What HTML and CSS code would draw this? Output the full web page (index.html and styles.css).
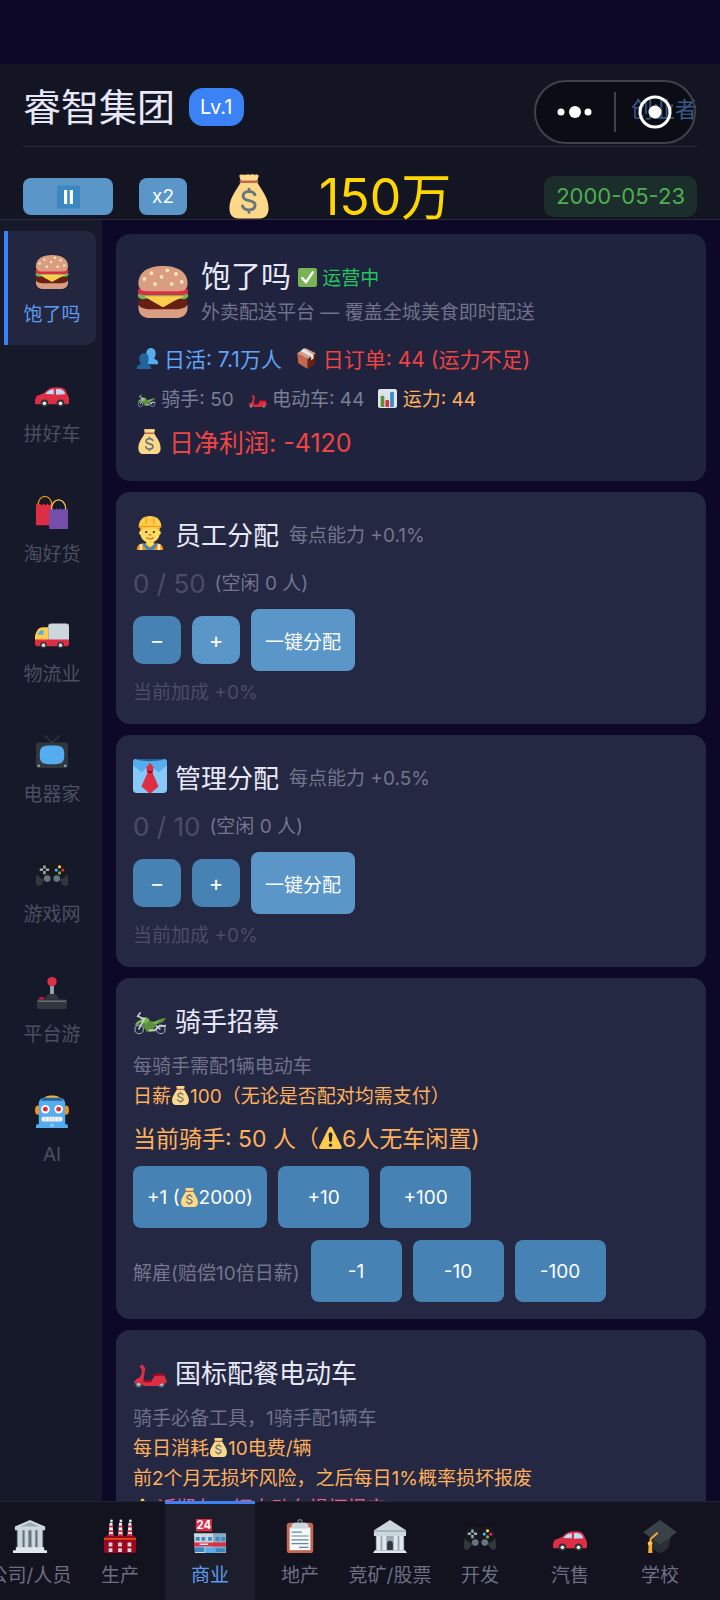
FILE: index.html
```html
<!DOCTYPE html>
<html lang="zh-CN">
<head>
  <meta charset="UTF-8" />
  <meta name="viewport" content="width=device-width, initial-scale=1.0" />
  <title>睿智集团</title>
  <link rel="stylesheet" href="styles.css">
</head>
<body>
  <!-- Icon sprite -->
  <svg class="sprite" width="0" height="0" aria-hidden="true">
    <symbol id="burger" viewBox="0 0 36 36">
      <path fill="#D99E82" d="M1 27h34v2c0 4-3 7-8 7H9c-5 0-8-3-8-7z"/>
      <path fill="#662113" d="M1 23h34v3c0 3-5 4-8 4H9c-3 0-8-1-8-4z"/>
      <path fill="#77B255" d="M1 19h34c1.500 2-.5 4-3 4-2 0-4-1-6 0-3 2-5 1-8 1s-5 1-8-1c-2-1-4 0-6 0-3 0-4-2-3-4z"/>
      <path fill="#FFCC4D" d="M5 21h28l-7 3-7 4c-1 .5-1.500.5-2 0l-7-4z"/>
      <path fill="#DD2E44" d="M1 16h34c1 2 0 4-3 4H4c-3 0-4-2-3-4z"/>
      <path fill="#D99E82" d="M18 0C8 0 1 4 1 12c0 4 2 5.500 6 5.500h22c4 0 6-1.500 6-5.500C35 4 28 0 18 0z"/>
      <g fill="#FFE8B6"><circle cx="10" cy="5" r="1.300"/><circle cx="17" cy="7.500" r="1.300"/><circle cx="21" cy="3" r="1.300"/><circle cx="27" cy="5.500" r="1.300"/><circle cx="5" cy="9" r="1.300"/><circle cx="12.500" cy="12.500" r="1.300"/><circle cx="24" cy="12.500" r="1.300"/><circle cx="31" cy="11" r="1.300"/></g>
    </symbol>
    <symbol id="car" viewBox="0 -4 36 36">
      <path fill="#DD2E44" d="M1 20c0-2 2-2.500 4-3 3-1 5-2 7-4 3-3 6-4 11-4 7 0 9 1 11 7 1 2 2 3 2 6v3c0 1.500-1 2-2 2H2c-1.500 0-2-.5-2-2 0-2 0-4 1-5z"/>
      <path fill="#BBDDF5" d="M11 16c2-3 5-5 9-5v5.500zM22 11c6-.5 9 1 10 5.500l-10 .5z"/>
      <path fill="#DD2E44" d="M20 10h2v8h-2z"/>
      <circle cx="10" cy="26" r="4" fill="#292F33"/><circle cx="27" cy="26" r="4" fill="#292F33"/>
      <circle cx="10" cy="26" r="2" fill="#E1E8ED"/><circle cx="27" cy="26" r="2" fill="#E1E8ED"/>
    </symbol>
    <symbol id="bags" viewBox="0 0 36 36">
      <path fill="none" stroke="#F4900C" stroke-width="1.300" d="M3 12C3-2 18-2 18 12"/>
      <path fill="#DD2E44" d="M1 9l2 2 2-2 2 2 2-2 2 2 2-2 2 2 2-2 1 2v21H1z"/>
      <path fill="#744EAA" d="M15 14l2 2 2-2 2 2 2-2 2 2 2-2 2 2 2-2 2 2 2-2v22H15z"/>
      <path fill="none" stroke="#FFCC4D" stroke-width="1.300" d="M17.500 15c0-13 15-13 15 0"/>
    </symbol>
    <symbol id="truck" viewBox="0 -4 36 36">
      <path fill="#CCD6DD" d="M14 8c0-2 1-3 3-3h16c2 0 3 1 3 3v15H14z"/>
      <path fill="#FFCC4D" d="M0 23v-5c2-6 4-9 8-9h6v14z"/>
      <path fill="#DD2E44" d="M0 22h36v4c0 2-1 3-2 3H2c-1 0-2-1-2-3z"/>
      <path fill="#55ACEE" d="M3 17c1-4 3-5 6-5v5z"/>
      <circle cx="9" cy="28" r="3.500" fill="#292F33"/><circle cx="27" cy="28" r="3.500" fill="#292F33"/>
      <circle cx="9" cy="28" r="2" fill="#CCD6DD"/><circle cx="27" cy="28" r="2" fill="#CCD6DD"/>
    </symbol>
    <symbol id="tv" viewBox="0 0 36 36">
      <path fill="none" stroke="#31373D" stroke-width="1.300" stroke-linecap="round" d="M11 1l7 7 8-7"/>
      <rect x="1" y="8" width="34" height="27" rx="3" fill="#31373D"/>
      <path fill="#55ACEE" d="M18 11c10 0 13 1 13 10s-3 10-13 10-13-1-13-10 3-10 13-10z"/>
      <circle cx="4" cy="32.500" r="1.300" fill="#99AAB5"/><circle cx="32" cy="32.500" r="1.300" fill="#99AAB5"/>
    </symbol>
    <symbol id="gamepad" viewBox="0 -2 36 36">
      <path fill="#31373D" d="M2 18l9 5-4 6c-2 3-6 2-6-1 0-4 0-7 1-10zM34 18l-9 5 4 6c2 3 6 2 6-1 0-4 0-7-1-10z"/>
      <path fill="#17191d" d="M3 10c2-5 8-6 11-3h8c3-3 9-2 11 3 2 4 1 9-1 11-3 3-7 2-9 2H13c-2 0-6 1-9-2-2-2-3-7-1-11z"/>
      <circle cx="13" cy="23" r="3.500" fill="#66757F"/><circle cx="23" cy="23" r="3.500" fill="#66757F"/>
      <path fill="none" stroke="#99AAB5" stroke-width="2.600" d="M10 9v3.500M10 15v3.500M5 13.700h3.500M11.500 13.700H15"/>
      <circle cx="26" cy="10.500" r="1.700" fill="#FFCC4D"/><circle cx="29.500" cy="14" r="1.700" fill="#DD2E44"/><circle cx="26" cy="17" r="1.700" fill="#77B255"/><circle cx="22.500" cy="14" r="1.700" fill="#55ACEE"/>
    </symbol>
    <symbol id="joystick" viewBox="0 -1 36 36">
      <path fill="#99AAB5" d="M16 8h4v15h-4z"/>
      <path fill="#31373D" d="M10 25c2-2 2-5 5-6h6c3 1 3 4 5 6z"/>
      <ellipse cx="7" cy="24" rx="3" ry="2" fill="#BE1931"/>
      <path fill="#31373D" d="M2 25h32v8c0 1-1 2-2 2H4c-1 0-2-1-2-2z"/>
      <path fill="#66757F" d="M3 26h30v1.500H3z"/>
      <circle cx="18" cy="6" r="5" fill="#DD2E44"/>
    </symbol>
    <symbol id="robot" viewBox="0 0 36 36">
      <ellipse cx="3" cy="16" rx="3" ry="5" fill="#F4900C"/><ellipse cx="33" cy="16" rx="3" ry="5" fill="#F4900C"/>
      <path fill="#FFAC33" d="M8 5c2-6 18-6 20 0z"/>
      <path fill="#55ACEE" d="M4 9c0-4 3-6 7-6h14c4 0 7 2 7 6v22h2c1 0 1 4 1 4H1s0-4 1-4h2z"/>
      <path fill="#226699" d="M9 3h18l3 3H6z"/>
      <circle cx="11" cy="15" r="4.500" fill="#fff"/><circle cx="25" cy="15" r="4.500" fill="#fff"/>
      <circle cx="11" cy="15" r="2.600" fill="#DD2E44"/><circle cx="25" cy="15" r="2.600" fill="#DD2E44"/>
      <rect x="7" y="23" width="22" height="5" rx="2" fill="#F5F8FA"/>
      <path stroke="#99AAB5" stroke-width=".6" d="M11 23v5M15 23v5M18 23v5M21 23v5M25 23v5"/>
      <circle cx="18" cy="32" r="2" fill="#88C9F9"/>
    </symbol>
    <symbol id="money" viewBox="0 0 36 36">
      <path fill="#FDD888" d="M11 7C7 14 2 19 2 28c0 5 3 8 7 8h18c4 0 7-3 7-8 0-9-5-14-9-21z"/>
      <path fill="#FDD888" d="M10 1c2-2 3 0 4-1 2 1 3-1 4 0s2-1 4 0c1 1 2-1 4 1l-1.500 5h-13z"/>
      <path fill="#BF6952" d="M11 5h14c1 0 1 2 0 2H11c-1 0-1-2 0-2z"/>
      <path fill="none" stroke="#67757F" stroke-width="2.400" stroke-linecap="round" d="M22.800 16.500c-1-2-2.500-2.700-4.800-2.700-3 0-4.800 1.500-4.800 3.700 0 5.500 9.800 2.200 9.800 7.500 0 2.500-2 4-5 4-2.700 0-4.700-1-5.300-3.300M18 12v2M18 29v2"/>
    </symbol>
    <symbol id="check" viewBox="0 0 36 36">
      <rect width="36" height="36" rx="4" fill="#77B255"/>
      <path fill="none" stroke="#fff" stroke-width="4.500" stroke-linecap="round" stroke-linejoin="round" d="M8 19l7 8L28 8"/>
    </symbol>
    <symbol id="users" viewBox="0 0 36 36">
      <path fill="#55ACEE" d="M24 0c5 0 8 4 8 9 0 4-1 7-3 9 3 2 7 3 7 7v3H18V16c-2-1-2-4-2-7 0-5 3-9 8-9z"/>
      <path fill="#226699" d="M12 9c5 0 8 4 8 9 0 4-1 7-3 9 3 2 7 3 7 7v2H0v-2c0-4 4-5 7-7-2-2-3-5-3-9 0-5 3-9 8-9z"/>
    </symbol>
    <symbol id="package" viewBox="0 0 36 36">
      <path fill="#C1694F" d="M2 9l18 10v17L4 26z"/>
      <path fill="#662113" d="M20 19L34 9l-2 19-12 8z"/>
      <path fill="#D99E82" d="M2 9L16 0l18 9-14 10z"/>
      <path fill="#E1E8ED" d="M8 5l5-4 17 11v6l-4 3v-6z"/>
    </symbol>
    <symbol id="moto" viewBox="0 -2 36 36">
      <circle cx="6.500" cy="27" r="4.500" fill="none" stroke="#99AAB5" stroke-width="1.200"/>
      <circle cx="29.500" cy="27" r="4.500" fill="none" stroke="#99AAB5" stroke-width="1.200"/>
      <path fill="#5C913B" d="M9 16c3-2 6-1 8 2l6 1c4-2 8-4 12-4l-3 4-8 3-3 7-6 1-5-7z"/>
      <path fill="#77B255" d="M8 15l6-1 4 3-4 4-4-2-7 4c-2-1 1-5 5-6zM20 20l10-4-6 6z"/>
      <path fill="none" stroke="#CCD6DD" stroke-width="1.700" d="M6 27l6-11-7-3 3-4M17 28h6l4-4 8-1M29 27l-5-4"/>
    </symbol>
    <symbol id="scooter" viewBox="0 -3 36 36">
      <circle cx="6" cy="29" r="3.300" fill="#66757F"/><circle cx="30" cy="29" r="3.300" fill="#66757F"/>
      <circle cx="6" cy="29" r="1.300" fill="#CCD6DD"/><circle cx="30" cy="29" r="1.300" fill="#CCD6DD"/>
      <path fill="#DD2E44" d="M1 28c1-4 4-5 6-6 2-3 3-6 2-9L7 10l3-2 3 4-2 13h9c2-4 4-7 7-7h5c2 1 1 3 2 4l2 4c0 2-2 2-4 2-3 0-4 3-8 3H13c-2 0-3-1-4-3-3-1-5 0-8 0z"/>
      <path fill="#A0041E" d="M21 18h12l1 2H20zM11 25h9l-1 2h-8z"/>
    </symbol>
    <symbol id="chart" viewBox="0 0 36 36">
      <rect width="36" height="36" rx="4" fill="#E1E8ED"/>
      <path stroke="#CCD6DD" d="M2 9h32M2 18h32M2 27h32M9 2v32M18 2v32M27 2v32"/>
      <path fill="#5C913B" d="M5 13h7v21H5z"/><path fill="#DD2E44" d="M14 21h7v13h-7z"/><path fill="#3B88C3" d="M23 6h7v28h-7z"/>
    </symbol>
    <symbol id="worker" viewBox="0 0 36 36">
      <path fill="#F4900C" d="M4 36c0-5 3-7 7-7h14c4 0 7 2 7 7z"/>
      <path fill="#FFDC5D" d="M14 25h8v5l-4 3-4-3z"/>
      <path fill="#3B88C3" d="M12 29l6 5 6-5 2 2-5 5h-6l-5-5z"/>
      <path fill="#FFE8B6" d="M7 30h3v6H7zM26 30h3v6h-3z"/>
      <path fill="#FFDC5D" d="M8 11h20v5c2 0 2 4 0 4-1 5-5 8-10 8S9 25 8 20c-2 0-2-4 0-4z"/>
      <path fill="#FFAC33" d="M8 12h20v4l-3-3H11l-3 3z"/>
      <path fill="#FFCC4D" d="M6 12C6 4 11 0 18 0s12 4 12 12c0 1-24 1-24 0z"/>
      <path fill="none" stroke="#F4900C" d="M14 1v8M22 1v8M6 11h24"/>
      <circle cx="14" cy="17" r="1.200" fill="#662113"/><circle cx="22" cy="17" r="1.200" fill="#662113"/>
      <path fill="none" stroke="#C1694F" stroke-width="1.200" stroke-linecap="round" d="M14.500 23c2 1.500 5 1.500 7 0M17 20h2"/>
    </symbol>
    <symbol id="tie" viewBox="0 0 36 36">
      <rect width="36" height="36" rx="4" fill="#88C9F9"/>
      <path fill="#55ACEE" d="M0 4c0-3 1-4 4-4h28c3 0 4 1 4 4v3l-9 7-9-8-9 8-9-7z"/>
      <path fill="#226699" d="M3 0h30c-3 3-27 3-30 0z"/>
      <path fill="#DD2E44" d="M18 4l4 5-1.500 5L27 29l-8 7h-2l-8-7 6.500-15L14 9z"/>
      <path fill="#A0041E" d="M14.500 11.500c2 2 5 2 7 0l-.8 2.500c-1.500 1.500-4 1.500-5.400 0z"/>
    </symbol>
    <symbol id="warning" viewBox="0 0 36 36">
      <path fill="#FFCC4D" d="M2.500 36C.5 36-.5 34 .7 32L15.500 2.500c1-2 4-2 5 0L35.300 32c1 2 0 4-1.800 4z"/>
      <path fill="#231F20" d="M15 13c0-4 6-4 6 0l-1 10c0 2-4 2-4 0z"/><circle cx="18" cy="30" r="2.600" fill="#231F20"/>
    </symbol>
    <symbol id="museum" viewBox="0 0 36 36">
      <path fill="#66757F" d="M4 11h28v20H4z"/>
      <path fill="#CCD6DD" d="M5 11h5v20H5zM12.300 11h4v20h-4zM19.600 11h4v20h-4zM26 11h5v20h-5z"/>
      <path fill="#CCD6DD" d="M18 1L2 8v4h32V8z"/><path fill="#99AAB5" d="M18 3.500L8 8h20z"/>
      <path fill="#E1E8ED" d="M3 30h30v3H3zM0 33h36v3H0z"/>
    </symbol>
    <symbol id="factory" viewBox="0 0 36 36">
      <path fill="#F5F8FA" d="M7 4h3l1 15H6zM17 4h3l1 15h-5zM27 4h3l1 15h-5z"/>
      <path stroke="#DD2E44" stroke-width="2" d="M6.500 8h4M16.500 8h4M26.500 8h4M6 13h5M16 13h5M26 13h5M6 17h5M16 17h5M26 17h5"/>
      <g fill="#E1E8ED"><circle cx="9" cy="2" r="1.500"/><circle cx="19" cy="2" r="1.500"/><circle cx="29" cy="2" r="1.500"/></g>
      <path fill="#A0041E" d="M1 20l2-2h30l2 2v14c0 1-1 2-2 2H3c-1 0-2-1-2-2z"/>
      <path fill="#F4900C" opacity=".6" d="M1 20h34v2H1z"/>
      <path fill="#CCD6DD" d="M6 25h4v4H6zM16 25h4v4h-4zM26 25h4v4h-4zM6 31h4v4H6zM16 31h4v4h-4zM26 31h4v4h-4z"/>
    </symbol>
    <symbol id="store" viewBox="0 0 36 36">
      <rect x="3" y="0" width="17" height="13" fill="#DD2E44"/>
      <text x="11.500" y="11" text-anchor="middle" fill="#fff" class="store-sign">24</text>
      <path fill="#CCD6DD" d="M1 15h21v21H2z"/><path fill="#88A9C3" d="M22 15h13v21H22z"/>
      <path fill="#3B88C3" d="M3 19h4v4H3zM9 19h4v4H9zM16 19h4v4h-4zM24 19h4v4h-4zM30 19h4v4h-4zM2 30h10v5H2zM24 31h10v4H24z"/>
      <path fill="#55ACEE" d="M13 30h10v6H13z"/>
      <path fill="#DD2E44" d="M1 25h34v4H1z"/><path fill="#F5F8FA" d="M7 26h9v1.500H7z"/>
    </symbol>
    <symbol id="clipboard" viewBox="0 0 36 36">
      <rect x="4" y="4" width="28" height="32" rx="3" fill="#C1694F"/>
      <path fill="#F5F8FA" d="M7 9h22v24H7z"/>
      <circle cx="18" cy="3" r="2.200" fill="none" stroke="#66757F" stroke-width="1.500"/>
      <path fill="#CCD6DD" d="M9 10V7c0-2 2-3 4-3h10c2 0 4 1 4 3v3z"/>
      <path stroke="#66839b" stroke-width="1.300" d="M9 14h11M9 18h18M9 22h18M9 26h18M17 30h10"/>
    </symbol>
    <symbol id="bank" viewBox="0 0 36 36">
      <path fill="#99AAB5" d="M3 16h30v17H3z"/>
      <path fill="#E1E8ED" d="M4 18h4v15H4zM10 18h4v15h-4zM22 18h4v15h-4zM28 18h4v15h-4z"/>
      <path fill="#31373D" d="M15 34v-8c0-4 6-4 6 0v8z"/>
      <path fill="#CCD6DD" d="M18 1L1 12v6h34v-6z"/><path fill="#99AAB5" d="M1 12h34v1.500H1z"/>
      <path fill="#E1E8ED" d="M2 33h32l2 3H0z"/>
    </symbol>
    <symbol id="grad" viewBox="0 0 36 36">
      <path fill="#292F33" d="M9 18l21 0-3 12c-2 3-7 6-9 6-4-1-8-5-9-8z"/>
      <path fill="#3a4147" d="M18 1l18 13-18 13L0 14z"/>
      <path fill="none" stroke="#FFAC33" stroke-width="2" stroke-linecap="round" d="M15 15l-7 6v6"/>
      <circle cx="7.500" cy="26" r="2.500" fill="#FFCC4D"/><path fill="#FFAC33" d="M6 27h3.500l.5 9H5.500z"/>
    </symbol>
    <symbol id="pause" viewBox="0 0 36 36">
      <rect width="36" height="36" rx="2" fill="#3B88C3"/>
      <path fill="#fff" d="M11 7h5v22h-5zM20 7h5v22h-5z"/>
    </symbol>
  </svg>

  <div class="app">
    <header class="header">
      <div class="company">
        <h1>睿智集团</h1>
        <span class="level">Lv.1</span>
        <span class="rank">创业者</span>
      </div>
      <div class="status">
        <button class="btn light pause" aria-label="暂停"><svg><use href="#pause"/></svg></button>
        <button class="btn light speed">x2</button>
        <div class="cash">
          <svg><use href="#money"/></svg>
          <span>150万</span>
        </div>
        <time class="date">2000-05-23</time>
      </div>
      <div class="capsule">
        <button aria-label="更多">
          <svg width="36" height="14" viewBox="0 0 36 14" fill="#fff"><circle cx="4" cy="7" r="3.500"/><circle cx="18" cy="7" r="6"/><circle cx="31" cy="7" r="3.500"/></svg>
        </button>
        <button aria-label="关闭">
          <svg width="34" height="34" viewBox="0 0 34 34"><circle cx="17" cy="17" r="15" fill="none" stroke="#fff" stroke-width="3"/><circle cx="17" cy="17" r="6.500" fill="#fff"/></svg>
        </button>
      </div>
    </header>

    <div class="body">
      <aside class="sidebar">
        <button class="side-item active"><svg><use href="#burger"/></svg><span>饱了吗</span></button>
        <button class="side-item"><svg><use href="#car"/></svg><span>拼好车</span></button>
        <button class="side-item"><svg><use href="#bags"/></svg><span>淘好货</span></button>
        <button class="side-item"><svg><use href="#truck"/></svg><span>物流业</span></button>
        <button class="side-item"><svg><use href="#tv"/></svg><span>电器家</span></button>
        <button class="side-item"><svg><use href="#gamepad"/></svg><span>游戏网</span></button>
        <button class="side-item"><svg><use href="#joystick"/></svg><span>平台游</span></button>
        <button class="side-item"><svg><use href="#robot"/></svg><span>AI</span></button>
      </aside>

      <main class="content">
        <section class="card overview">
          <div class="overview-head">
            <svg class="logo"><use href="#burger"/></svg>
            <div>
              <div class="name-row">
                <h2>饱了吗</h2>
                <span class="running"><svg class="emoji"><use href="#check"/></svg> 运营中</span>
              </div>
              <p class="desc">外卖配送平台 — 覆盖全城美食即时配送</p>
            </div>
          </div>
          <div class="stats large">
            <span class="blue"><svg class="emoji"><use href="#users"/></svg> 日活: 7.1万人</span>
            <span class="red"><svg class="emoji"><use href="#package"/></svg> 日订单: 44 (运力不足)</span>
          </div>
          <div class="stats">
            <span><svg class="emoji"><use href="#moto"/></svg> 骑手: 50</span>
            <span><svg class="emoji"><use href="#scooter"/></svg> 电动车: 44</span>
            <span class="orange"><svg class="emoji"><use href="#chart"/></svg> 运力: 44</span>
          </div>
          <div class="profit red"><svg class="emoji"><use href="#money"/></svg> 日净利润: -4120</div>
        </section>

        <section class="card">
          <div class="card-head">
            <svg><use href="#worker"/></svg>
            <h3>员工分配</h3>
            <span class="hint">每点能力 +0.1%</span>
          </div>
          <div class="count"><span class="num">0 / 50</span><span class="hint">(空闲 0 人)</span></div>
          <div class="assign">
            <button class="btn step" aria-label="减少">−</button>
            <button class="btn light step" aria-label="增加">+</button>
            <button class="btn light auto">一键分配</button>
          </div>
          <p class="bonus">当前加成 +0%</p>
        </section>

        <section class="card">
          <div class="card-head">
            <svg><use href="#tie"/></svg>
            <h3>管理分配</h3>
            <span class="hint">每点能力 +0.5%</span>
          </div>
          <div class="count"><span class="num">0 / 10</span><span class="hint">(空闲 0 人)</span></div>
          <div class="assign">
            <button class="btn step" aria-label="减少">−</button>
            <button class="btn step" aria-label="增加">+</button>
            <button class="btn light auto">一键分配</button>
          </div>
          <p class="bonus">当前加成 +0%</p>
        </section>

        <section class="card">
          <div class="card-head">
            <svg><use href="#moto"/></svg>
            <h3>骑手招募</h3>
          </div>
          <div class="notes">
            <p>每骑手需配1辆电动车</p>
            <p class="orange">日薪<svg class="emoji"><use href="#money"/></svg>100（无论是否配对均需支付）</p>
          </div>
          <p class="current orange">当前骑手: 50 人（<svg class="emoji"><use href="#warning"/></svg>6人无车闲置)</p>
          <div class="actions">
            <button class="btn">+1 (<svg class="emoji"><use href="#money"/></svg>2000)</button>
            <button class="btn">+10</button>
            <button class="btn">+100</button>
          </div>
          <div class="actions">
            <span class="hint">解雇(赔偿10倍日薪)</span>
            <button class="btn">-1</button>
            <button class="btn">-10</button>
            <button class="btn">-100</button>
          </div>
        </section>

        <section class="card">
          <div class="card-head">
            <svg><use href="#scooter"/></svg>
            <h3>国标配餐电动车</h3>
          </div>
          <div class="notes">
            <p>骑手必备工具，1骑手配1辆车</p>
            <p class="orange">每日消耗<svg class="emoji"><use href="#money"/></svg>10电费/辆</p>
            <p class="orange">前2个月无损坏风险，之后每日1%概率损坏报废</p>
            <p class="pink"><svg class="emoji"><use href="#warning"/></svg> 近期有一辆电动车损坏报废</p>
          </div>
        </section>
      </main>
    </div>

    <nav class="tabbar">
      <div class="tabs">
        <button class="tab"><svg><use href="#museum"/></svg><span>公司/人员</span></button>
        <button class="tab"><svg><use href="#factory"/></svg><span>生产</span></button>
        <button class="tab active"><svg><use href="#store"/></svg><span>商业</span></button>
        <button class="tab"><svg><use href="#clipboard"/></svg><span>地产</span></button>
        <button class="tab"><svg><use href="#bank"/></svg><span>竞矿/股票</span></button>
        <button class="tab"><svg><use href="#gamepad"/></svg><span>开发</span></button>
        <button class="tab"><svg><use href="#car"/></svg><span>汽售</span></button>
        <button class="tab"><svg><use href="#grad"/></svg><span>学校</span></button>
      </div>
    </nav>
  </div>
</body>
</html>
```
FILE: styles.css
```css
* {
  margin: 0;
  padding: 0;
  box-sizing: border-box;
}

body {
  font-family: 'Inter', 'Noto Sans CJK SC', sans-serif;
  font-size: 19px;
  font-weight: 400;
  background: #0d0828;
  color: #e8e9f8;
}

h1,
h2,
h3 {
  font-weight: 400;
}

button {
  font: inherit;
  color: inherit;
  border: none;
  background: none;
  cursor: pointer;
}

.sprite {
  position: absolute;
}

.store-sign {
  font-size: 12px;
  font-weight: 700;
}

.emoji {
  width: 1em;
  height: 1em;
  vertical-align: -2px;
}

.blue {
  color: #60a5fa;
}

.red {
  color: #ef4444;
}

.orange {
  color: #ffb05c;
}

.pink {
  color: #f0608a;
}

.app {
  height: 100vh;
  padding-top: 64px;
  display: flex;
  flex-direction: column;
}

/* Header */
.header {
  position: relative;
  flex-shrink: 0;
  padding: 0 23px;
  background: #141523;
  border-bottom: 1px solid #2a2b38;
}

.company {
  height: 83px;
  padding-top: 4px;
  display: flex;
  align-items: center;
  gap: 14px;
  border-bottom: 1px solid #2a2b38;
}

.company h1 {
  font-size: 38px;
  line-height: 48px;
}

.level {
  padding: 0 11px;
  font-size: 20px;
  line-height: 38px;
  border-radius: 14px;
  background: #3b82f6;
  color: #ffffff;
}

.rank {
  margin-left: auto;
  font-size: 22px;
  color: #5f93de;
}

.status {
  height: 72px;
  padding-top: 27px;
  display: flex;
  align-items: center;
}

.btn {
  display: inline-flex;
  align-items: center;
  justify-content: center;
  border-radius: 8px;
  background: #4682b4;
  color: #ffffff;
}

.btn.light {
  background: #5a96c8;
}

.pause {
  width: 90px;
  height: 37px;
  margin-right: 26px;
}

.pause svg {
  width: 23px;
  height: 24px;
}

.speed {
  width: 48px;
  height: 37px;
}

.cash {
  flex: 1;
  padding-left: 40px;
  display: flex;
  align-items: center;
  gap: 48px;
  font-size: 50px;
  line-height: 44px;
  color: #ffd700;
  white-space: nowrap;
}

.cash svg {
  width: 44px;
  height: 45px;
}

.date {
  padding: 0 12px;
  font-size: 22px;
  line-height: 41px;
  border-radius: 10px;
  background: #1c2e2c;
  color: #4caf50;
}

/* Floating mini-program menu */
.capsule {
  position: absolute;
  top: 16px;
  right: 24px;
  width: 162px;
  height: 64px;
  display: flex;
  align-items: center;
  border: 2px solid #41414b;
  border-radius: 32px;
  background: rgba(0, 0, 0, 0.4);
}

.capsule button {
  flex: 1;
  height: 40px;
  display: flex;
  align-items: center;
  justify-content: center;
}

.capsule button + button {
  border-left: 2px solid #41414b;
}

/* Page body */
.body {
  flex: 1;
  min-height: 0;
  display: flex;
  overflow: hidden;
}

.sidebar {
  width: 102px;
  flex-shrink: 0;
  padding: 11px 6px 0 4px;
  display: flex;
  flex-direction: column;
  gap: 6px;
  background: #161929;
}

.side-item {
  height: 114px;
  padding-top: 24px;
  flex-shrink: 0;
  display: flex;
  flex-direction: column;
  align-items: center;
  gap: 12px;
  line-height: 28px;
  border-left: 4px solid transparent;
  border-radius: 0 10px 10px 0;
  color: #4c4f62;
}

.side-item svg {
  width: 34px;
  height: 34px;
  flex-shrink: 0;
}

.side-item.active {
  background: #22273f;
  border-left-color: #3b82f6;
  color: #5f9bf0;
}

.content {
  flex: 1;
  min-width: 0;
  padding: 14px 14px 0;
  display: flex;
  flex-direction: column;
  gap: 11px;
}

.card {
  flex-shrink: 0;
  padding: 17px;
  border-radius: 14px;
  background: #252842;
}

.overview {
  padding: 21px 21px 15px;
  background: #1f233d;
}

.overview-head {
  display: flex;
  align-items: center;
  gap: 12px;
  margin-bottom: 11px;
}

.logo {
  width: 52px;
  height: 52px;
}

.name-row {
  display: flex;
  align-items: center;
  gap: 7px;
}

.name-row h2 {
  font-size: 30px;
  line-height: 42px;
}

.running {
  color: #22c55e;
}

.desc {
  line-height: 32px;
  color: #6f7289;
}

.stats {
  display: flex;
  gap: 14px;
  line-height: 40px;
  color: #7b7e96;
}

.stats.large {
  font-size: 21px;
}

.profit {
  font-size: 25px;
  line-height: 46px;
}

.card-head {
  height: 48px;
  margin-bottom: 9px;
  display: flex;
  align-items: center;
}

.card-head svg {
  width: 34px;
  height: 34px;
  margin-right: 8px;
}

.card-head h3 {
  margin-right: 10px;
  font-size: 26px;
}

.hint {
  color: #73768d;
}

.count {
  display: flex;
  align-items: center;
  gap: 9px;
  line-height: 36px;
}

.num {
  font-size: 26px;
  color: #4b4d66;
}

.assign {
  display: flex;
  align-items: center;
  gap: 11px;
  margin: 7px 0;
}

.step {
  width: 48px;
  height: 48px;
  border-radius: 10px;
  font-size: 22px;
}

.auto {
  height: 62px;
  padding: 0 14px;
}

.bonus {
  line-height: 29px;
  color: #4b4d66;
}

.notes {
  line-height: 30px;
  color: #6f7289;
}

.current {
  margin: 9px 0;
  font-size: 23px;
  line-height: 36px;
}

.actions {
  display: flex;
  flex-wrap: wrap;
  align-items: center;
  gap: 11px;
}

.actions + .actions {
  margin-top: 12px;
}

.actions .btn {
  min-width: 91px;
  height: 62px;
  padding: 0 14px;
}

/* Bottom tabs */
.tabbar {
  flex-shrink: 0;
  overflow: hidden;
  background: #12131f;
  box-shadow: inset 0 1px 0 #242532;
}

/* strip is scrolled slightly to the left */
.tabs {
  display: flex;
  margin-left: -15px;
}

.tab {
  width: 90px;
  height: 99px;
  padding-top: 15px;
  flex-shrink: 0;
  display: flex;
  flex-direction: column;
  align-items: center;
  gap: 9px;
  line-height: 28px;
  white-space: nowrap;
  border-top: 3px solid transparent;
  color: #6c6f82;
}

.tab svg {
  width: 34px;
  height: 34px;
  flex-shrink: 0;
}

.tab.active {
  background: #1c1e2b;
  border-top-color: #3b82f6;
  color: #5f9bf0;
}
```
